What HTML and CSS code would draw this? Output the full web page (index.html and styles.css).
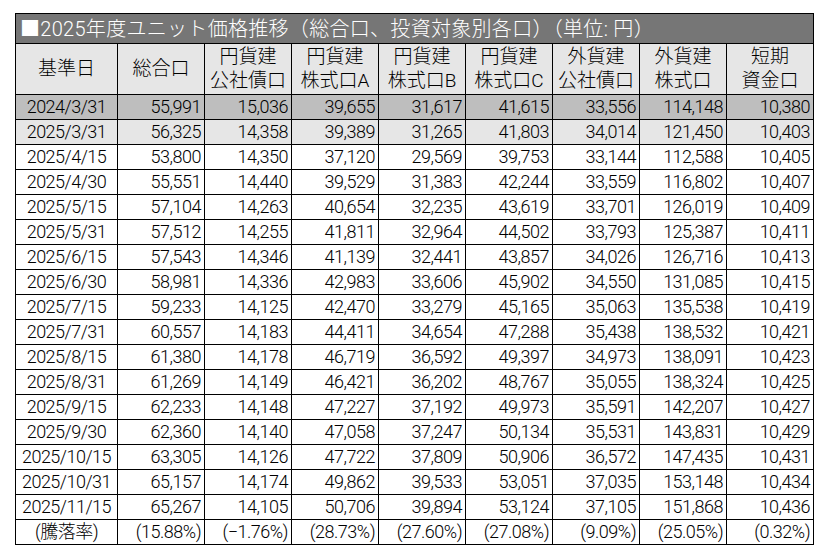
FILE: index.html
```html
<!DOCTYPE html>
<html lang="ja">
<head>
<meta charset="utf-8">
<link rel="stylesheet" href="styles.css">
</head>
<body>
<table class="price-table">
  <colgroup>
    <col class="c-date"><col class="c-n"><col class="c-n"><col class="c-n"><col class="c-n"><col class="c-n"><col class="c-n"><col class="c-n"><col class="c-n">
  </colgroup>
  <thead>
    <tr class="title-row"><th colspan="9">■2025年度ユニット価格推移（総合口、投資対象別各口）（単位: 円）</th></tr>
    <tr class="head-row">
      <th>基準日</th>
      <th>総合口</th>
      <th>円貨建<br>公社債口</th>
      <th>円貨建<br>株式口A</th>
      <th>円貨建<br>株式口B</th>
      <th>円貨建<br>株式口C</th>
      <th>外貨建<br>公社債口</th>
      <th>外貨建<br>株式口</th>
      <th>短期<br>資金口</th>
    </tr>
  </thead>
  <tbody>
    <tr class="r-dark"><td>2024/3/31</td><td>55,991</td><td>15,036</td><td>39,655</td><td>31,617</td><td>41,615</td><td>33,556</td><td>114,148</td><td>10,380</td></tr>
    <tr class="r-light"><td>2025/3/31</td><td>56,325</td><td>14,358</td><td>39,389</td><td>31,265</td><td>41,803</td><td>34,014</td><td>121,450</td><td>10,403</td></tr>
    <tr><td>2025/4/15</td><td>53,800</td><td>14,350</td><td>37,120</td><td>29,569</td><td>39,753</td><td>33,144</td><td>112,588</td><td>10,405</td></tr>
    <tr><td>2025/4/30</td><td>55,551</td><td>14,440</td><td>39,529</td><td>31,383</td><td>42,244</td><td>33,559</td><td>116,802</td><td>10,407</td></tr>
    <tr><td>2025/5/15</td><td>57,104</td><td>14,263</td><td>40,654</td><td>32,235</td><td>43,619</td><td>33,701</td><td>126,019</td><td>10,409</td></tr>
    <tr><td>2025/5/31</td><td>57,512</td><td>14,255</td><td>41,811</td><td>32,964</td><td>44,502</td><td>33,793</td><td>125,387</td><td>10,411</td></tr>
    <tr><td>2025/6/15</td><td>57,543</td><td>14,346</td><td>41,139</td><td>32,441</td><td>43,857</td><td>34,026</td><td>126,716</td><td>10,413</td></tr>
    <tr><td>2025/6/30</td><td>58,981</td><td>14,336</td><td>42,983</td><td>33,606</td><td>45,902</td><td>34,550</td><td>131,085</td><td>10,415</td></tr>
    <tr><td>2025/7/15</td><td>59,233</td><td>14,125</td><td>42,470</td><td>33,279</td><td>45,165</td><td>35,063</td><td>135,538</td><td>10,419</td></tr>
    <tr><td>2025/7/31</td><td>60,557</td><td>14,183</td><td>44,411</td><td>34,654</td><td>47,288</td><td>35,438</td><td>138,532</td><td>10,421</td></tr>
    <tr><td>2025/8/15</td><td>61,380</td><td>14,178</td><td>46,719</td><td>36,592</td><td>49,397</td><td>34,973</td><td>138,091</td><td>10,423</td></tr>
    <tr><td>2025/8/31</td><td>61,269</td><td>14,149</td><td>46,421</td><td>36,202</td><td>48,767</td><td>35,055</td><td>138,324</td><td>10,425</td></tr>
    <tr><td>2025/9/15</td><td>62,233</td><td>14,148</td><td>47,227</td><td>37,192</td><td>49,973</td><td>35,591</td><td>142,207</td><td>10,427</td></tr>
    <tr><td>2025/9/30</td><td>62,360</td><td>14,140</td><td>47,058</td><td>37,247</td><td>50,134</td><td>35,531</td><td>143,831</td><td>10,429</td></tr>
    <tr><td>2025/10/15</td><td>63,305</td><td>14,126</td><td>47,722</td><td>37,809</td><td>50,906</td><td>36,572</td><td>147,435</td><td>10,431</td></tr>
    <tr><td>2025/10/31</td><td>65,157</td><td>14,174</td><td>49,862</td><td>39,533</td><td>53,051</td><td>37,035</td><td>153,148</td><td>10,434</td></tr>
    <tr><td>2025/11/15</td><td>65,267</td><td>14,105</td><td>50,706</td><td>39,894</td><td>53,124</td><td>37,105</td><td>151,868</td><td>10,436</td></tr>
    <tr><td>(騰落率)</td><td>(15.88%)</td><td>(−1.76%)</td><td>(28.73%)</td><td>(27.60%)</td><td>(27.08%)</td><td>(9.09%)</td><td>(25.05%)</td><td>(0.32%)</td></tr>
  </tbody>
</table>
</body>
</html>
```
FILE: styles.css
```css
html, body {
  margin: 0;
  padding: 0;
  background: #ffffff;
}
body {
  padding: 13px 0 0 15px;
  font-family: "Roboto", "Noto Sans CJK JP", sans-serif;
  font-weight: 300;
  color: #000;
}
.price-table {
  border-collapse: collapse;
  table-layout: fixed;
  width: 799px;
  font-size: 19px;
  line-height: 24px;
}
.c-date { width: 102px; }
.c-n { width: 87px; }
.price-table th,
.price-table td {
  border: 1px solid #000;
  padding: 0 2px;
  font-weight: 300;
  white-space: nowrap;
  overflow: hidden;
}
.title-row th {
  background: #767676;
  color: #fff;
  text-align: left;
  height: 29px;
  padding: 0 4px;
  font-size: 20px;
  letter-spacing: 0.3px;
}
.head-row th {
  background: #e6e6e6;
  text-align: center;
  height: 50px;
  line-height: 24px;
}
.price-table td {
  height: 24px;
  text-align: right;
  font-size: 18px;
  letter-spacing: -0.5px;
  padding-right: 3px;
}
.price-table td:first-child {
  text-align: center;
  padding: 0 1px;
}
.r-dark td { background: #bebebe; }
.r-light td { background: #e6e6e6; }
```
